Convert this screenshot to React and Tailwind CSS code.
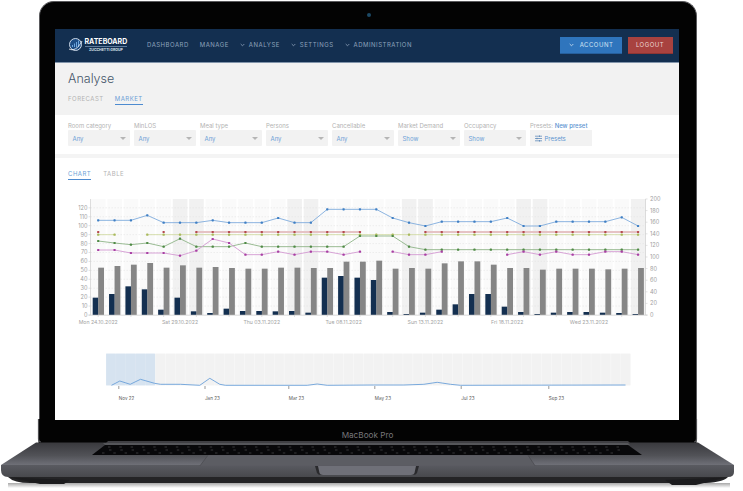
import React from 'react';

const font = "font-['Inter','Liberation_Sans',sans-serif]";

const filters = [
    { label: "Room category", value: "Any" },
    { label: "MinLOS", value: "Any" },
    { label: "Meal type", value: "Any" },
    { label: "Persons", value: "Any" },
    { label: "Cancellable", value: "Any" },
    { label: "Market Demand", value: "Show" },
    { label: "Occupancy", value: "Show" },
];

// all series below are read off the picture, zoom y => page y = 160 + z / 3
const toY = (z) => 160 + z / 3;
const dayX = (i) => 97.7 + 16.36 * i;

const blue = [178, 178, 178, 163, 185, 185, 185, 178, 185, 185, 185, 171, 185, 185, 145, 145, 145, 145, 171, 185, 195, 182, 182, 182, 182, 171, 195, 195, 182, 182, 182, 182, 169, 195];
const green = [240, 246, 251, 246, 257, 233, 257, 257, 257, 246, 257, 257, 257, 257, 257, 257, 225, 225, 225, 257, 266, 266, 266, 266, 266, 266, 266, 266, 266, 266, 266, 266, 266, 266];
const purple = [267, 267, 276, 276, 276, 284, 269, 234, 246, 281, 281, 272, 281, 272, 272, 281, 272, null, 272, 281, 281, 272, null, null, null, 281, 272, 281, 272, 281, 281, 272, 272, 281];
const red = [213, null, null, null, 213, null, 213, 213, 213, 213, 213, 213, 213, 213, 213, 213, 213, null, null, null, 213, 213, 213, 213, 213, 213, 213, 213, 213, 213, 213, 213, 213, 213];
const olive = [221, 221, null, 221, 221, 221, 221, 221, 221, 221, 221, 221, 221, 221, 221, 221, 221, 221, 221, 221, 221, 221, 221, 221, 221, 221, 221, 221, 221, 221, 221, 221, 221, 221];
const navyBars = [410, 399, 376, 385, 446, 410, 451, 456, 443, 450, 450, 451, 450, 455, 350, 345, 350, 357, 453, 459, 455, 446, 430, 399, 399, 437, 453, 459, 455, 453, 453, 455, 456, 459];
const grayBars = [320, 315, 311, 306, 320, 313, 320, 318, 321, 323, 323, 320, 320, 321, 321, 302, 302, 299, 323, 321, 323, 307, 301, 301, 311, 321, 321, 326, 323, 323, 323, 325, 323, 321];
const weekend = [5, 6, 12, 13, 19, 20, 26, 27, 33];

const xLabels = [
    [0, "Mon 24.10.2022"],
    [5, "Sat 29.10.2022"],
    [10, "Thu 03.11.2022"],
    [15, "Tue 08.11.2022"],
    [20, "Sun 13.11.2022"],
    [25, "Fri 18.11.2022"],
    [30, "Wed 23.11.2022"],
];

const miniLine = "111,384.3 119.3,380 129.7,383.3 140,378.3 154,382.3 160,383.3 180,383.3 199.3,384.3 209.3,377.3 219.3,383.3 225,384.3 306.7,384.3 316.7,383 326.7,384.3 373.3,384 403.3,384 423.3,383.3 436.7,381.3 450,383.3 460,384.3 625,384";
const miniTicks = [
    [118.3, "Nov 22"],
    [204.5, "Jan 23"],
    [288.3, "Mar 23"],
    [374.3, "May 23"],
    [460.7, "Jul 23"],
    [548.3, "Sep 23"],
];

// splits a series into runs, missing days leave a gap in the line
function segments(data) {
    const out = [];
    let run = [];
    data.forEach((v, i) => {
        if (v === null) {
            if (run.length) out.push(run);
            run = [];
        } else {
            run.push(`${dayX(i)},${toY(v)}`);
        }
    });
    if (run.length) out.push(run);
    return out;
}

function Series({ data, line, dot, width = 0.9 }) {
    return (
        <g>
            {segments(data).map((run, i) => (
                <polyline key={i} points={run.join(" ")} fill="none" stroke={line} strokeWidth={width} />
            ))}
            {data.map((v, i) =>
                v === null ? null : <rect key={i} x={dayX(i) - 1.1} y={toY(v) - 1.1} width="2.2" height="2.2" rx="0.6" fill={dot} />
            )}
        </g>
    );
}

function NavItem({ label, menu }) {
    return (
        <div className="flex items-center gap-[4px]">
            {menu && (
                <svg width="5" height="4" viewBox="0 0 5 4" fill="none" stroke="#8fa3bc" strokeWidth="0.8">
                    <path d="M0.7 1 L2.5 2.8 L4.3 1" />
                </svg>
            )}
            <span className="text-[6px] leading-[8px] tracking-[0.5px] text-[#8ea2bb]">{label}</span>
        </div>
    );
}

function Select({ label, value }) {
    return (
        <div className="w-[61.5px]">
            <div className="text-[6px] leading-[9px] h-[9px] text-[#b3b3b3] whitespace-nowrap">{label}</div>
            <div className="h-[16px] bg-[#f2f2f2] rounded-[1px] flex items-center justify-between pl-[4.5px] pr-[4px]">
                <span className="text-[6px] text-[#6c9fd6]">{value}</span>
                <div className="w-0 h-0 border-l-[3px] border-r-[3px] border-t-[3px] border-l-transparent border-r-transparent border-t-[#b5b5b5]" />
            </div>
        </div>
    );
}

function Logo() {
    return (
        <div className="flex items-center gap-[2px] w-[66px]">
            <svg width="15" height="16" viewBox="0 0 15 16" className="shrink-0">
                <circle cx="7.5" cy="7.5" r="6" fill="#1d4d85" stroke="#dfe8f2" strokeWidth="0.9" />
                <path d="M4 10 V8 H5 V10 Z M6 10 V6.5 H7 V10 Z M8 10 V5 H9 V10 Z M10 10 V3.5 H11 V10 Z" fill="#6ea6de" />
                <path d="M1 12 C5 14 10 12 14 4" fill="none" stroke="#ffffff" strokeWidth="0.8" />
            </svg>
            <div className="flex flex-col items-center">
                <span className="text-[7px] leading-[9px] font-bold text-white">RATEBOARD</span>
                <div className="h-px w-[42px] bg-[#5f7b9c]" />
                <span className="text-[3.5px] leading-[7px] font-bold text-[#dbe3ec]">ZUCCHETTI GROUP</span>
            </div>
        </div>
    );
}

function Chart() {
    return (
        <svg width="626" height="145" viewBox="54.5 185 626 145" className="block" fontFamily="Inter, sans-serif">
            {Array.from({ length: 34 }).map((_, i) => (
                <rect key={i} x={90.5 + 16.36 * i} y="198" width="14.6" height="116" fill={weekend.includes(i) ? "#f1f1f1" : "#fafafa"} />
            ))}
            {Array.from({ length: 12 }).map((_, i) => (
                <line key={i} x1="90" x2="645" y1={314 - 8.93 * (i + 1)} y2={314 - 8.93 * (i + 1)} stroke="#e4e4e4" strokeWidth="0.6" strokeDasharray="1.5 1.5" />
            ))}
            {navyBars.map((z, i) => (
                <rect key={i} x={dayX(i) - 5.5} y={toY(z)} width="5.7" height={314 - toY(z)} fill="#132f50" />
            ))}
            {grayBars.map((z, i) => (
                <rect key={i} x={dayX(i)} y={toY(z)} width="5.8" height={314 - toY(z)} fill="#868686" />
            ))}
            <line x1="90" x2="90" y1="198" y2="314" stroke="#cfcfcf" strokeWidth="0.7" />
            <line x1="645" x2="645" y1="198" y2="314" stroke="#cfcfcf" strokeWidth="0.7" />
            <line x1="88" x2="647" y1="314.2" y2="314.2" stroke="#cfcfcf" strokeWidth="0.8" />
            <Series data={red} line="#e6c3c5" dot="#b5484f" width="2" />
            <Series data={olive} line="#d3dba6" dot="#a9b95c" />
            <Series data={green} line="#8fb488" dot="#4f8a45" />
            <Series data={purple} line="#d49ad2" dot="#a83fa3" />
            <Series data={blue} line="#7fabdd" dot="#3f7fc4" />
            {Array.from({ length: 13 }).map((_, i) => (
                <g key={i}>
                    <line x1="88" x2="90" y1={314 - 8.93 * i} y2={314 - 8.93 * i} stroke="#cfcfcf" strokeWidth="0.6" />
                    <text x="87" y={316 - 8.93 * i} textAnchor="end" fontSize="5.6" fill="#a0a0a0">{i * 10}</text>
                </g>
            ))}
            {Array.from({ length: 11 }).map((_, i) => (
                <g key={i}>
                    <line x1="645" x2="647" y1={314 - 11.6 * i} y2={314 - 11.6 * i} stroke="#cfcfcf" strokeWidth="0.6" />
                    <text x="649.5" y={316 - 11.6 * i} fontSize="5.6" fill="#a0a0a0">{i * 20}</text>
                </g>
            ))}
            {Array.from({ length: 17 }).map((_, i) => (
                <line key={i} x1={dayX(i * 2)} x2={dayX(i * 2)} y1="314" y2="316" stroke="#cfcfcf" strokeWidth="0.6" />
            ))}
            {xLabels.map(([i, label]) => (
                <text key={label} x={dayX(i)} y="322.5" textAnchor="middle" fontSize="5.2" fill="#a3a3a3">{label}</text>
            ))}
        </svg>
    );
}

function MiniChart() {
    return (
        <svg width="626" height="60" viewBox="54.5 345 626 60" className="block mt-[15px]" fontFamily="Inter, sans-serif">
            <rect x="105.7" y="352.7" width="48.5" height="31.6" fill="#dfe8f2" />
            <rect x="154.2" y="352.7" width="475.8" height="31.6" fill="#f9f9f9" />
            {Array.from({ length: 53 }).map((_, i) => (
                <rect key={i} x={105.7 + 9.9 * i} y="352.7" width="9.4" height="31.6" fill={i < 5 ? "#d6e3f0" : "#f2f2f2"} />
            ))}
            <polyline points={miniLine} fill="none" stroke="#6ba0d9" strokeWidth="0.9" />
            {miniTicks.map(([x, label]) => (
                <g key={label}>
                    <line x1={x} x2={x} y1="385" y2="388" stroke="#555555" strokeWidth="0.6" />
                    <text x={x} y="398.5" fontSize="4.6" fill="#5a5a5a">{label}</text>
                </g>
            ))}
        </svg>
    );
}

// laptop base, drawn from the bottom of the screen down
function LaptopBase() {
    const keys = [];
    for (let row = 0; row < 3; row++) {
        for (let i = 0; i < 46; i++) {
            const y = 447 + row * 3;
            keys.push(<line key={`${row}-${i}`} x1={108 - row * 3 + i * 11.3 + (row % 2) * 4} x2={110.5 - row * 3 + i * 11.3 + (row % 2) * 4} y1={y} y2={y} stroke="#66666a" strokeWidth="0.5" />);
        }
    }
    return (
        <svg width="743" height="72" viewBox="0 419 743 72" className="block" fontFamily="Inter, sans-serif">
            <defs>
                <linearGradient id="deck" x1="0" x2="0" y1="0" y2="1">
                    <stop offset="0" stopColor="#39393d" />
                    <stop offset="0.55" stopColor="#515257" />
                    <stop offset="1" stopColor="#72737b" />
                </linearGradient>
                <linearGradient id="front" x1="0" x2="0" y1="0" y2="1">
                    <stop offset="0" stopColor="#5a5b61" />
                    <stop offset="1" stopColor="#48494d" />
                </linearGradient>
                <linearGradient id="shade" x1="0" x2="0" y1="0" y2="1">
                    <stop offset="0" stopColor="#a8a8a8" />
                    <stop offset="1" stopColor="#ffffff" />
                </linearGradient>
            </defs>
            <rect x="8" y="483" width="722" height="5" fill="url(#shade)" />
            <rect x="38.5" y="419" width="658" height="24" fill="#030303" />
            <path d="M38.5 419 V439 Q38.5 442 41 442 M694 442 Q696.5 442 696.5 439 V419" fill="none" stroke="#4f4f52" strokeWidth="1.2" />
            <path d="M36 442.5 H698 L734 465 V466 H1 V465 Z" fill="url(#deck)" />
            <path d="M1 465 H734 V472 Q734 477 728 477 H8 Q1 477 1 470 Z" fill="url(#front)" />
            <path d="M8 477 H728 Q722 483 700 483 H30 Q14 483 8 477 Z" fill="#242426" />
            <path d="M10 477.5 L40 484 H64 L70 480 Z" fill="#1c1c1e" />
            <path d="M665 480 L672 485 H696 L726 477.5 Z" fill="#1c1c1e" />
            <path d="M108 441 H628 L630 443 H106 Z" fill="#3f3f43" />
            <path d="M105 445 H628 L642 455 H92 Z" fill="#08080a" />
            <path d="M103 443 H628 L630 445 H105 Z" fill="#55565a" />
            {keys}
            <path d="M208 455.3 H528 L535 465.7 H200 Z" fill="#5c5d63" />
            <path d="M208 455.3 L200 465.7 M528 455.3 L535 465.7" stroke="#44454a" strokeWidth="0.6" />
            <path d="M315 466 H419 L417 473 Q416 475 413 475 H321 Q318 475 317 473 Z" fill="#2a2a2d" />
            <path d="M318 466 H416 L414.5 473 Q414 475 411 475 H323 Q320 475 319.5 473 Z" fill="#6f7078" />
            <text x="367.5" y="438" textAnchor="middle" fontSize="8.2" fill="#77777a">MacBook Pro</text>
        </svg>
    );
}

function App() {
    return (
        <div className={`w-[743px] h-[491px] overflow-hidden bg-white pt-px ${font}`}>
            <div className="relative ml-[38.5px] w-[658px] h-[418px] pt-[27px] pl-[15px] pr-[16.5px] bg-[#030303] rounded-t-[15px] border-t border-x border-[#5a5a5d]">
                <div className="absolute top-[11px] left-[327px] w-[4px] h-[4px] rounded-full bg-[#1d4a66]" />

                <div className="h-[391px] bg-white flex flex-col overflow-hidden">
                    <header className="h-[34px] shrink-0 bg-[#132f50] border-b border-[#8295ab] flex items-center pl-[13px] pr-[6.5px] pb-px">
                        <Logo />
                        <nav className="ml-[13.5px] flex items-center gap-[11px]">
                            <NavItem label="DASHBOARD" />
                            <NavItem label="MANAGE" />
                            <NavItem label="ANALYSE" menu />
                            <NavItem label="SETTINGS" menu />
                            <NavItem label="ADMINISTRATION" menu />
                        </nav>
                        <div className="ml-auto flex items-center gap-[5.5px]">
                            <button className="w-[62px] h-[17px] bg-[#2f75bd] border-b border-[#265f9c] flex items-center justify-center gap-[6px]">
                                <svg width="5" height="4" viewBox="0 0 5 4" fill="none" stroke="#d5e4f3" strokeWidth="0.8">
                                    <path d="M0.7 1 L2.5 2.8 L4.3 1" />
                                </svg>
                                <span className="text-[6px] tracking-[0.5px] text-[#d5e4f3]">ACCOUNT</span>
                            </button>
                            <button className="w-[45px] h-[17px] bg-[#a8423f] border-b border-[#8d3533] text-[6px] tracking-[0.5px] text-[#ecd5d4]">
                                LOGOUT
                            </button>
                        </div>
                    </header>

                    <section className="h-[52px] shrink-0 bg-[#f2f2f2] pl-[13.5px] pt-[7px]">
                        <h1 className="text-[12.5px] leading-[18px] font-light text-[#46566a]">Analyse</h1>
                        <div className="mt-[7px] flex gap-[11px] text-[6px] leading-[8px] tracking-[0.5px]">
                            <span className="text-[#b3b3b3]">FORECAST</span>
                            <span className="text-[#6c9fd6] border-b border-[#4d8bd0] h-[10px]">MARKET</span>
                        </div>
                    </section>

                    <section className="h-[38.5px] shrink-0 pl-[13.5px] pt-[6px] flex gap-[4.5px]">
                        {filters.map((f) => (
                            <Select key={f.label} label={f.label} value={f.value} />
                        ))}
                        <div className="w-[61.5px]">
                            <div className="text-[6px] leading-[9px] h-[9px] text-[#b3b3b3] whitespace-nowrap">
                                Presets: <span className="font-medium text-[#5b93d0]">New preset</span>
                            </div>
                            <div className="h-[16px] bg-[#f2f2f2] flex items-center gap-[2.5px] pl-[5px]">
                                <svg width="7" height="7" viewBox="0 0 7 7" stroke="#4f7fb5" strokeWidth="0.7" fill="none">
                                    <path d="M0 1.2 H7 M0 3.5 H7 M0 5.8 H7 M4.5 0.4 V2 M2 2.7 V4.3 M4.5 5 V6.6" />
                                </svg>
                                <span className="text-[6px] text-[#5b93d0]">Presets</span>
                            </div>
                        </div>
                    </section>

                    <div className="h-[4px] shrink-0 bg-[#f4f4f4]" />

                    <div className="pl-[13.5px] pt-[12px] h-[28.5px] shrink-0 flex gap-[12px] text-[6px] leading-[8px] tracking-[0.5px]">
                        <span className="text-[#6c9fd6] border-b border-[#4d8bd0] h-[10px]">CHART</span>
                        <span className="text-[#b3b3b3]">TABLE</span>
                    </div>

                    <Chart />
                    <MiniChart />
                </div>
            </div>
            <LaptopBase />
        </div>
    );
}

export default App;
